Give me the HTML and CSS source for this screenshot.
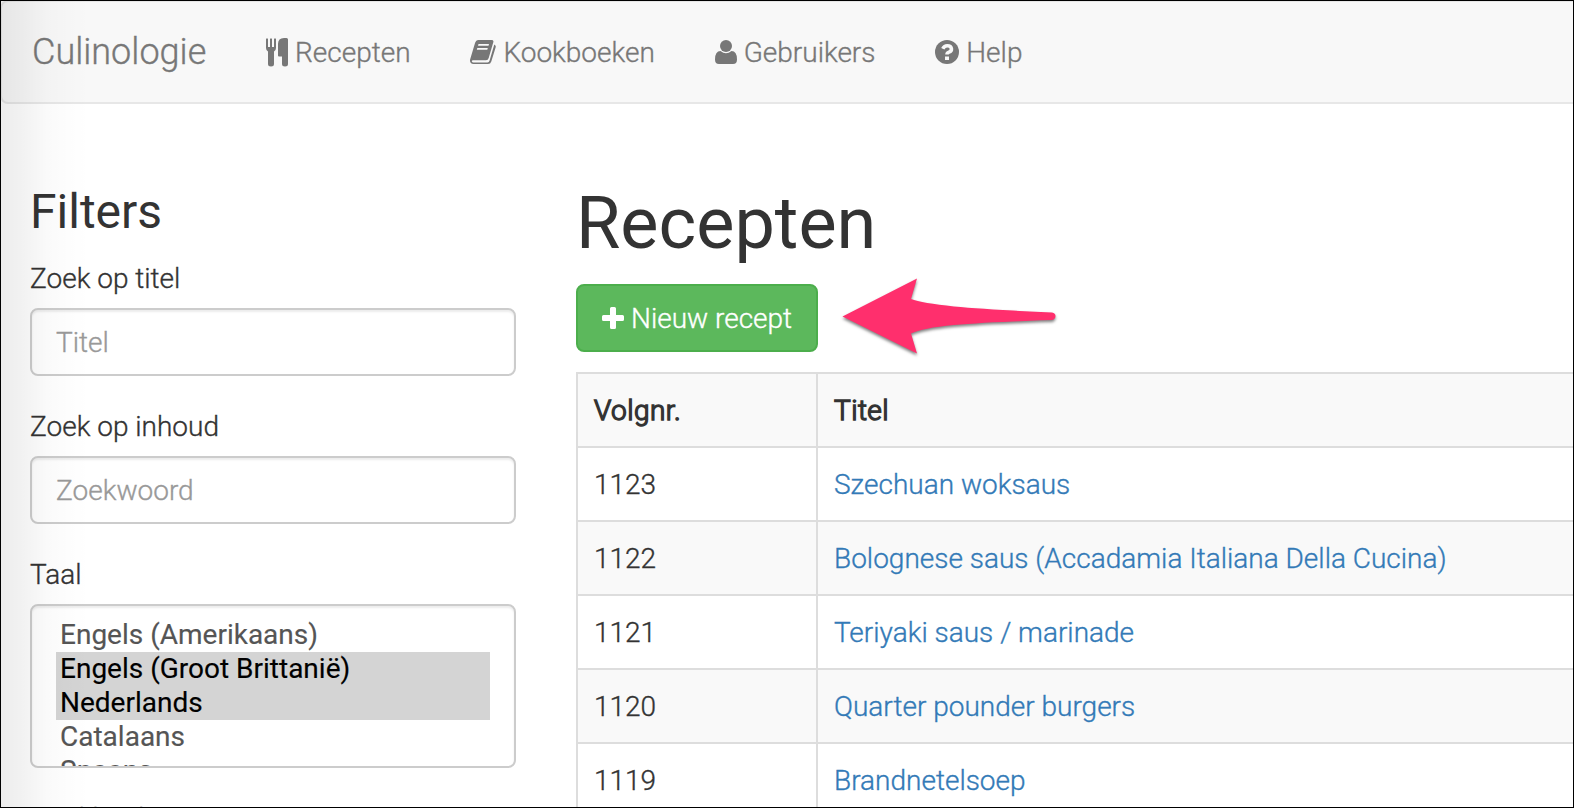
FILE: index.html
```html
<!DOCTYPE html>
<html lang="nl">
<head>
<meta charset="utf-8">
<title>Culinologie</title>
<link rel="stylesheet" href="styles.css">
</head>
<body>
<div class="window">
  <nav class="navbar">
    <a class="brand">Culinologie</a>
    <a class="nav-link"><svg class="icon" width="22" height="29" viewBox="0 0 22 29"><path d="M0 1Q1-.4 2 1V9H4V1Q5-.4 6 1V9H8V1Q9-.4 10 1V10Q10 12.500 8 13.500V26Q8 28.500 5 28.500T2 26V13.500Q0 12.500 0 10ZM12 6Q12 0 18 0H20.500Q22 0 22 1.500V26Q22 28.500 19 28.500T16 26V18.500H13Q12 18.500 12 17.500Z"/></svg><span>Recepten</span></a>
    <a class="nav-link"><svg class="icon" width="26" height="24" viewBox="0 0 26 24"><path d="M8 0H21.500Q24 0 23.300 2.300L18.700 18Q18 20.300 16 20.300H3Q1.600 20.300 1.900 21.500Q2.200 22.400 3.500 22.400H17.500Q19 22.400 19.600 20.500L24.300 4.500Q26.300 5.500 25.600 7.500L21.300 21.500Q20.500 24 18 24H3.500Q-.6 24 .1 19.500L5.100 2.800Q6 0 8 0ZM8.500 4L8 5.800H18.500L19 4ZM7.300 8L6.800 9.800H17.300L17.800 8Z" fill-rule="evenodd"/></svg><span>Kookboeken</span></a>
    <a class="nav-link"><svg class="icon" width="22" height="24" viewBox="0 0 22 24"><circle cx="11" cy="6" r="6"/><path d="M5.500 11Q11 15.500 16.500 11Q22 11 22 19.500Q22 24 18 24H4Q0 24 0 19.500Q0 11 5.500 11Z"/></svg><span>Gebruikers</span></a>
    <a class="nav-link"><svg class="icon" width="24" height="24" viewBox="0 0 24 24"><circle cx="12" cy="12" r="12"/><path class="mark" d="M7.800 8.800Q9.300 5.800 12.200 5.800C17.500 5.800 17.500 11 14 12.100Q12 12.800 12 14.500"/><path class="dot" d="M10 16.500H14V20H10Z"/></svg><span>Help</span></a>
  </nav>
  <div class="columns">
    <aside class="filters">
      <h3>Filters</h3>
      <div class="group"><label>Zoek op titel</label><input class="control" placeholder="Titel"></div>
      <div class="group"><label>Zoek op inhoud</label><input class="control" placeholder="Zoekwoord"></div>
      <div class="group"><label>Taal</label>
        <div class="control list">
          <div class="option">Engels (Amerikaans)</div>
          <div class="option selected">Engels (Groot Brittanië)</div>
          <div class="option selected">Nederlands</div>
          <div class="option">Catalaans</div>
          <div class="option">Spaans</div>
        </div>
      </div>
      <div class="group"><label>Kookboek</label></div>
    </aside>
    <main class="content">
      <h1>Recepten</h1>
      <div class="actions">
        <a class="button"><svg class="plus" width="22" height="22" viewBox="0 0 22 22"><path d="M9.500 0H12.500Q14 0 14 1.500V8H20.500Q22 8 22 9.500V12.500Q22 14 20.500 14H14V20.500Q14 22 12.500 22H9.500Q8 22 8 20.500V14H1.500Q0 14 0 12.500V9.500Q0 8 1.500 8H8V1.500Q8 0 9.500 0Z"/></svg><span>Nieuw recept</span></a>
        <svg class="arrow" width="216" height="78" viewBox="0 0 216 78"><path d="M0.500 38.500L75 .5L69 21Q80 25 112 28.500Q145 31.500 210 34.500Q213.500 35 213.500 38T210 42Q145 44 112 47Q80 50 69 55.500L75 75.500Z"/></svg>
      </div>
      <table class="recipes">
        <colgroup><col class="number"><col></colgroup>
        <tr><th>Volgnr.</th><th>Titel</th></tr>
        <tr><td>1123</td><td><a>Szechuan woksaus</a></td></tr>
        <tr><td>1122</td><td><a>Bolognese saus (Accadamia Italiana Della Cucina)</a></td></tr>
        <tr><td>1121</td><td><a>Teriyaki saus / marinade</a></td></tr>
        <tr><td>1120</td><td><a>Quarter pounder burgers</a></td></tr>
        <tr><td>1119</td><td><a>Brandnetelsoep</a></td></tr>
      </table>
    </main>
  </div>
</div>
</body>
</html>
```
FILE: styles.css
```css
* { box-sizing: border-box; }
body {
  margin: 0;
  overflow: hidden;
  font: 300 28px/40px Roboto, sans-serif;
  color: #333;
  background: #fff;
  -webkit-text-stroke: .35px;
}
.window {
  position: relative;
  height: 808px;
  overflow: hidden;
}
/* Edge shadow and window frame lie over the page. */
.window::before {
  content: "";
  position: absolute;
  inset: 0 auto 0 0;
  width: 90px;
  background: linear-gradient(90deg, rgba(0,0,0,.075), rgba(0,0,0,.055) 20px, rgba(0,0,0,.02) 48px, rgba(0,0,0,.006) 70px, transparent);
  z-index: 2;
}
.window::after {
  content: "";
  position: absolute;
  inset: 0;
  border: 1px solid #000;
  z-index: 3;
}
.navbar {
  display: flex;
  align-items: center;
  height: 104px;
  width: 1600px;
  padding-left: 30px;
  border: 2px solid #e7e7e7;
  border-radius: 8px;
  background: #f8f8f8;
  color: #777;
}
.brand { width: 234px; font-size: 36px; }
.nav-link { display: flex; align-items: center; gap: 7px; margin-right: 59.8px; }
.nav-link span, .button span { padding-top: 2px; }
.icon { fill: currentColor; flex: none; }
.mark { fill: none; stroke: #f8f8f8; stroke-width: 3.6; }
.dot { fill: #f8f8f8; }
.columns {
  display: grid;
  grid-template-columns: 486px 1030px;
  column-gap: 60px;
  padding-left: 30px;
}
h1, h3 { margin: 0; font-weight: 400; line-height: 1.1; -webkit-text-stroke: 0; }
.filters { padding-top: 82px; }
h3 { height: 72px; font-size: 48px; }
.group { margin-bottom: 30px; }
label { display: block; padding-top: 1px; margin-bottom: 9px; }
.control {
  display: block;
  width: 100%;
  height: 68px;
  padding: 12px 24px;
  border: 2px solid #ccc;
  border-radius: 8px;
  background: #fff;
  box-shadow: inset 0 2px 2px rgba(0,0,0,.075);
  font: inherit;
  color: #555;
  -webkit-text-stroke: .35px;
}
.control::placeholder { color: #999; opacity: 1; }
.list { height: 164px; overflow: hidden; font-weight: 400; -webkit-text-stroke: .15px; }
.option { height: 34px; padding-left: 4px; line-height: 34px; }
.selected { background: #d4d4d4; color: #000; }
.content { padding-top: 80px; }
h1 { height: 100px; font-size: 72px; }
.actions { display: flex; align-items: flex-start; height: 88px; }
.button {
  display: flex;
  align-items: center;
  gap: 7px;
  width: 242px;
  height: 68px;
  padding-left: 24px;
  border: 2px solid #4cae4c;
  border-radius: 8px;
  background: #5cb85c;
  color: #fff;
}
.plus { fill: #fff; }
.arrow { margin: -6px 0 0 24px; fill: #ff2f6d; overflow: visible; filter: drop-shadow(0 2px 1.500px rgba(0,0,0,.5)); }
.recipes { width: 1030px; border-collapse: collapse; table-layout: fixed; }
.number { width: 240px; }
th, td { height: 74px; padding: 17px 16px 15px; border: 2px solid #ddd; text-align: left; }
th { font-weight: 300; letter-spacing: .45px; -webkit-text-stroke: 1.4px; }
tr:nth-child(odd) { background: #f9f9f9; }
.recipes a { color: #337ab7; }
```
